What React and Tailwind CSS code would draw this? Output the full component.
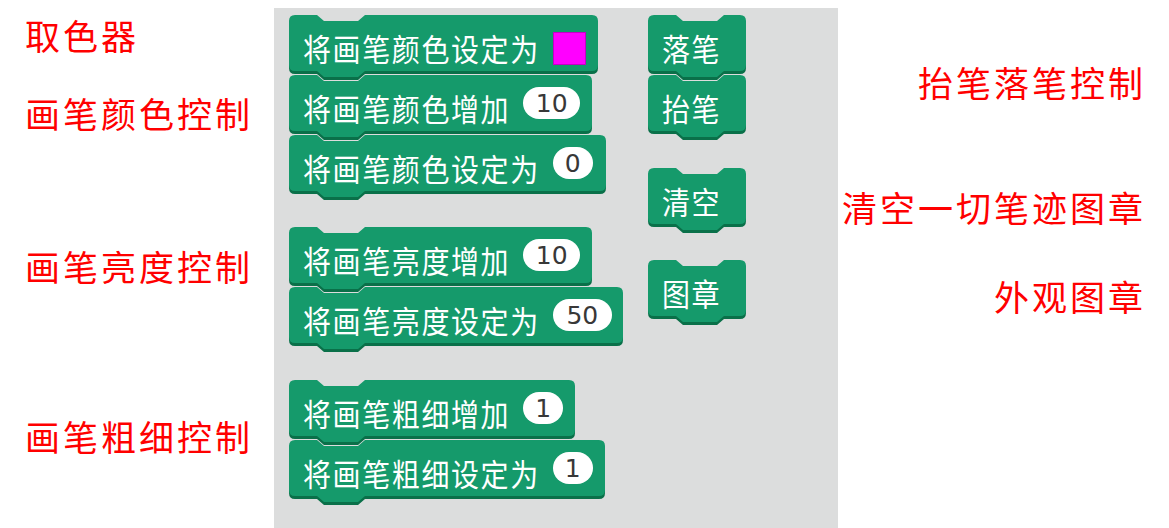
const GREEN = '#159a6b';
const SHADE = '#0a7049';

// Scratch-2 style stack block outline: notch on top, tab at the bottom
function blockPath(w, h) {
  return `M0 6 Q0 0 6 0 L28 0 L35 6 L69 6 L76 0 L${w - 6} 0 Q${w} 0 ${w} 6 L${w} ${h - 6} Q${w} ${h} ${w - 6} ${h} L76 ${h} L69 ${h + 6} L35 ${h + 6} L28 ${h} L6 ${h} Q0 ${h} 0 ${h - 6} Z`;
}

const CJK = "font-['Noto_Sans_CJK_SC','Noto_Sans',sans-serif]";

function Block({ w, widthClass, label, input }) {
  return (
    <div className={`relative h-[60px] ${widthClass}`}>
      <svg className="absolute left-0 top-0 overflow-visible" width={w} height={62}>
        <path d={blockPath(w, 56)} transform="translate(0,3)" fill={SHADE} />
        <path d={blockPath(w, 56)} fill={GREEN} />
      </svg>
      <div className="relative flex h-[56px] items-center gap-[13px] pl-[14px]">
        <span className={`mt-[9px] inline-block scale-y-110 text-[28px] leading-none tracking-[1.6px] text-white ${CJK}`}>
          {label}
        </span>
        {input}
      </div>
    </div>
  );
}

function Num({ value, widthClass }) {
  return (
    <span className={`flex h-[32px] items-center justify-center rounded-full bg-white text-[25px] leading-none text-[#383838] font-['DejaVu_Sans',sans-serif] ${widthClass}`}>
      {value}
    </span>
  );
}

const GROUPS = [
  {
    mt: 'mt-0',
    blocks: [
      { w: 309, widthClass: 'w-[309px]', label: '将画笔颜色设定为', input: <span className="mt-[10px] h-[33px] w-[33px] border border-[#c400c4] bg-[#f0f]" /> },
      { w: 303, widthClass: 'w-[303px]', label: '将画笔颜色增加', input: <Num value="10" widthClass="w-[57px]" /> },
      { w: 317, widthClass: 'w-[317px]', label: '将画笔颜色设定为', input: <Num value="0" widthClass="w-[40px]" /> },
    ],
  },
  {
    mt: 'mt-[32px]',
    blocks: [
      { w: 303, widthClass: 'w-[303px]', label: '将画笔亮度增加', input: <Num value="10" widthClass="w-[57px]" /> },
      { w: 334, widthClass: 'w-[334px]', label: '将画笔亮度设定为', input: <Num value="50" widthClass="w-[59px]" /> },
    ],
  },
  {
    mt: 'mt-[33px]',
    blocks: [
      { w: 286, widthClass: 'w-[286px]', label: '将画笔粗细增加', input: <Num value="1" widthClass="w-[40px]" /> },
      { w: 316, widthClass: 'w-[316px]', label: '将画笔粗细设定为', input: <Num value="1" widthClass="w-[40px]" /> },
    ],
  },
];

const RIGHT_GROUPS = [
  { mt: 'mt-0', labels: ['落笔', '抬笔'] },
  { mt: 'mt-[33px]', labels: ['清空'] },
  { mt: 'mt-[32px]', labels: ['图章'] },
];

const LEFT_NOTES = [
  { mt: 'mt-[15px]', text: '取色器' },
  { mt: 'mt-[38px]', text: '画笔颜色控制' },
  { mt: 'mt-[113px]', text: '画笔亮度控制' },
  { mt: 'mt-[130px]', text: '画笔粗细控制' },
];

const RIGHT_NOTES = [
  { mt: 'mt-[62px]', text: '抬笔落笔控制' },
  { mt: 'mt-[85px]', text: '清空一切笔迹图章' },
  { mt: 'mt-[49px]', text: '外观图章' },
];

function Note({ mt, text }) {
  return (
    <div className={`${mt} h-[40px] text-[35px] leading-[40px] tracking-[3px] text-[#f00] ${CJK}`}>{text}</div>
  );
}

export default function App() {
  return (
    <div className="flex h-[528px] w-[1169px] overflow-hidden bg-white">
      {/* left notes */}
      <div className="flex w-[274px] shrink-0 flex-col pl-[25px]">
        {LEFT_NOTES.map(n => <Note key={n.text} {...n} />)}
      </div>

      {/* script area */}
      <div className="mt-[8px] flex h-[520px] w-[564px] shrink-0 bg-[#dcdddd] pl-[15px] pt-[7px]">
        <div className="flex w-[359px] flex-col">
          {GROUPS.map((g, i) => (
            <div key={i} className={`flex flex-col ${g.mt}`}>
              {g.blocks.map((b, j) => <Block key={j} {...b} />)}
            </div>
          ))}
        </div>
        <div className="flex flex-col">
          {RIGHT_GROUPS.map((g, i) => (
            <div key={i} className={`flex flex-col ${g.mt}`}>
              {g.labels.map(l => <Block key={l} w={98} widthClass="w-[98px]" label={l} />)}
            </div>
          ))}
        </div>
      </div>

      {/* right notes */}
      <div className="flex flex-1 flex-col items-end pr-[23px]">
        {RIGHT_NOTES.map(n => <Note key={n.text} {...n} />)}
      </div>
    </div>
  );
}
